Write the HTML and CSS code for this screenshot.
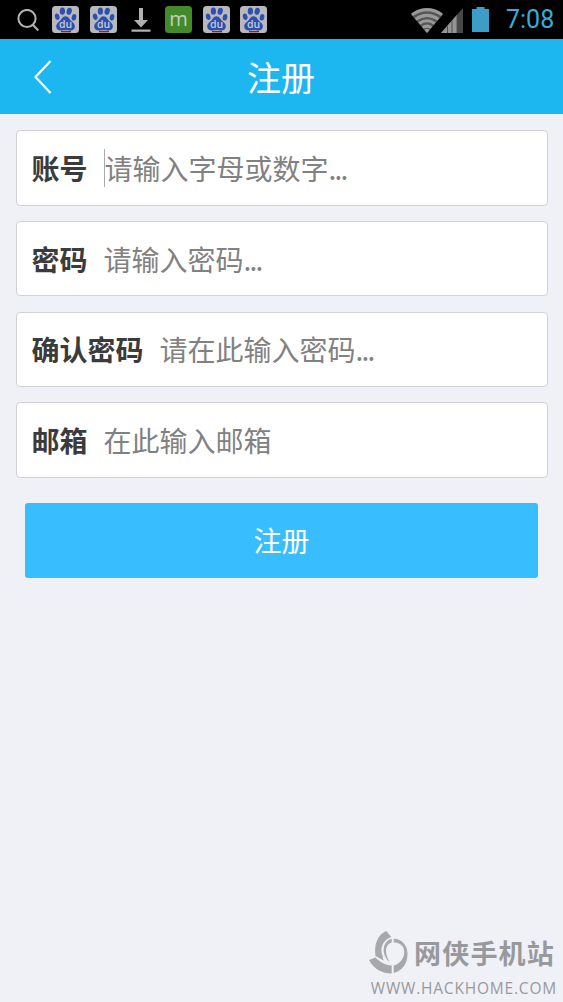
FILE: index.html
```html
<!DOCTYPE html>
<html lang="zh-CN">
<head>
<meta charset="utf-8">
<title>注册</title>
<link rel="stylesheet" href="styles.css">
</head>
<body>
<div class="screen">
  <div class="status">
    <div class="notices">
      <svg class="search" width="24" height="24" viewBox="0 0 24 24"><circle cx="10" cy="9.500" r="8.600"/><path d="M16 16l5.300 5.500"/></svg>
      <svg class="tile" width="27" height="27" viewBox="0 0 27 27">
        <g id="paw">
          <rect width="27" height="27" rx="3.500" fill="#b9b9bd"/>
          <g fill="#2d4fae">
            <ellipse cx="10.400" cy="5.200" rx="2.600" ry="3.600"/>
            <ellipse cx="17.200" cy="5.300" rx="2.600" ry="3.600" transform="rotate(12 17.200 5.300)"/>
            <ellipse cx="5.200" cy="10.700" rx="2.300" ry="3.300" transform="rotate(-12 5.200 10.700)"/>
            <ellipse cx="22" cy="11.300" rx="2.300" ry="3.300" transform="rotate(10 22 11.300)"/>
            <path d="M13.500 10.200c3.200 0 4 3.400 6.300 5.300 2.200 1.800 3.500 3.300 3 5.800-.6 3-3.300 3.400-5.300 3.100-2.500-.4-5.200-.4-7.800 0-2 .3-4.800-.1-5.400-3.100-.5-2.500.8-4 3-5.800 2.300-1.900 3-5.300 6.200-5.300z"/>
          </g>
          <path d="M9 25.600h10" stroke="#7b2732" stroke-width="1.500"/>
        </g>
        <text class="paw-text" x="13.500" y="21.800">du</text>
      </svg>
      <svg class="tile" width="27" height="27"><use href="#paw"/><text class="paw-text" x="13.500" y="21.800">du</text></svg>
      <svg class="download" width="20" height="26" viewBox="0 0 20 26"><path d="M8 1h4v12h5L10 20.500 3 13h5zM.5 22.500h19v2.200H.5z"/></svg>
      <svg class="tile" width="27" height="27" viewBox="0 0 27 27"><rect width="27" height="27" rx="3.500" fill="#438b2a"/><text class="m-text" x="13.500" y="20">m</text></svg>
      <svg class="tile" width="27" height="27"><use href="#paw"/><text class="paw-text" x="13.500" y="21.800">du</text></svg>
      <svg class="tile" width="27" height="27"><use href="#paw"/><text class="paw-text" x="13.500" y="21.800">du</text></svg>
    </div>
    <div class="signals">
      <svg class="wifi" width="32" height="26" viewBox="0 0 32 26">
        <path d="M0 6.500Q16-5 32 6.500L16 25z" fill="#555"/>
        <g fill="none" stroke="#999" stroke-width="3"><path d="M1 6.800Q16-3.500 31 6.800M4.600 11.200q11.400-7.700 22.800 0M8.200 15.500q7.800-5.500 15.600 0M11.600 19.600q4.400-3 8.800 0"/></g>
        <path d="M13.200 21.800q2.800-1.700 5.600 0L16 25z" fill="#999"/>
      </svg>
      <svg class="cell" width="22" height="25" viewBox="0 0 22 25"><path d="M0 25L22 0v25z" fill="#484848"/><path d="M0 25L16 6.800V25z" fill="#959595"/><path d="M6.500 17v8M11 12.500V25M16 7v18" stroke="#505050" stroke-width="1"/></svg>
      <svg class="battery" width="17" height="25" viewBox="0 0 17 25"><path d="M4.500 0h8v2H17v23H0V2h4.500z"/></svg>
      <span class="clock">7:08</span>
    </div>
  </div>

  <header class="bar">
    <svg class="back" width="18" height="34" viewBox="0 0 18 34"><path d="M16.500 1L1.500 17l15 16"/></svg>
    <h1 class="title">注册</h1>
  </header>

  <main class="form">
    <div class="field"><span class="label">账号</span><span class="hint focused">请输入字母或数字<span class="dots">...</span></span></div>
    <div class="field"><span class="label">密码</span><span class="hint">请输入密码<span class="dots">...</span></span></div>
    <div class="field"><span class="label">确认密码</span><span class="hint">请在此输入密码<span class="dots">...</span></span></div>
    <div class="field"><span class="label">邮箱</span><span class="hint">在此输入邮箱</span></div>
    <div class="submit">注册</div>
  </main>

  <footer class="brand">
    <div class="brand-row">
      <svg class="brand-logo" width="40" height="44" viewBox="0 0 40 44">
        <g fill="#a7a8ac">
          <path d="M17.300 0L22.300 6C14 9 10.500 17 13.500 24.500L14.500 29.500L6.500 25C5 14 8 4 17.300 0z"/>
          <path d="M0 29L6.500 26.500C11 31 16 34.300 22.700 34.600V42.500C13 42.500 5 38 0 29z"/>
          <path d="M24.700 34.600C33 32 37 24 34.500 17C32.500 13 29 11.500 24.700 11.500V7.700C33 8 38.500 14 38.500 23C38.500 33 33 40 24.700 42z"/>
          <path d="M22.700 7.700V11.500C16 13 15 22 20.700 31C12 24 13 10 22.700 7.700z"/>
        </g>
      </svg>
      <span class="brand-name">网侠手机站</span>
    </div>
    <div class="brand-url">WWW.HACKHOME.COM</div>
  </footer>
</div>
</body>
</html>
```

FILE: styles.css
```css
* { box-sizing: border-box; }
body {
  margin: 0;
  font-family: "Noto Sans CJK SC", sans-serif;
}
.screen {
  display: flex;
  flex-direction: column;
  width: 563px;
  height: 1002px;
  overflow: hidden;
  background: #f0f1f6;
}
.status {
  display: flex;
  justify-content: space-between;
  height: 39px;
  background: #000;
}
.notices {
  display: flex;
  align-items: center;
  padding-left: 17px;
}
.search { fill: none; stroke: #b4b4b4; stroke-width: 2; margin: 2px 11px 0 0; }
.tile { margin-right: 10.5px; }
.download { fill: #b0b0b0; margin: 0 14px 0 4px; }
.paw-text {
  font: 600 10.5px "Open Sans", sans-serif;
  fill: #c9cbd8;
  text-anchor: middle;
}
.m-text {
  font: 20px "Open Sans", sans-serif;
  fill: #c3cfbd;
  text-anchor: middle;
}
.signals {
  display: flex;
  align-items: center;
  padding-right: 10px;
}
.wifi { margin: 2px -2px 0 0; }
.cell { margin: 2px 9px 0 0; }
.battery { fill: #3c9dc8; margin-right: 17px; }
.clock {
  font: 25px/41px Roboto, sans-serif;
  color: #35aedd;
  width: 47px;
  white-space: nowrap;
}
.bar {
  display: grid;
  grid-template-columns: 80px 1fr 81px;
  align-items: center;
  height: 75px;
  background: #1cb6f1;
}
.back {
  margin-left: 34px;
  fill: none;
  stroke: #fff;
  stroke-width: 2.2;
}
.title {
  margin: 0;
  font-size: 34px;
  font-weight: 400;
  line-height: 75px;
  text-align: center;
  color: #fff;
}
.form {
  display: flex;
  flex-direction: column;
  gap: 15.3px;
  padding: 16px 15.5px 0;
}
.field {
  display: flex;
  align-items: center;
  gap: 16px;
  height: 75.5px;
  padding-left: 15px;
  border: 1px solid #d2d2d4;
  border-radius: 4px;
  background: #fff;
  font-size: 28px;
  line-height: 38px;
  white-space: nowrap;
}
.label { font-weight: 700; color: #3b3b3b; }
.hint { color: #818181; }
.dots { letter-spacing: -1.8px; }
.focused { border-left: 1px solid #aaa; }
.submit {
  height: 75px;
  margin: 9.5px 9.5px 0;
  border-radius: 3px;
  background: #38bdff;
  color: #fff;
  font-size: 28px;
  line-height: 75px;
  text-align: center;
}
.brand {
  margin-top: auto;
  padding: 0 6px 3px 0;
  color: #98999d;
}
.brand-row {
  display: flex;
  justify-content: flex-end;
  align-items: center;
  gap: 5px;
  height: 48px;
}
.brand-name {
  width: 143px;
  font-size: 27px;
  font-weight: 700;
  letter-spacing: 1.2px;
  line-height: 40px;
  white-space: nowrap;
}
.brand-url {
  font: 500 15.5px/22px "Open Sans", sans-serif;
  letter-spacing: 0.8px;
  text-align: right;
}
```
